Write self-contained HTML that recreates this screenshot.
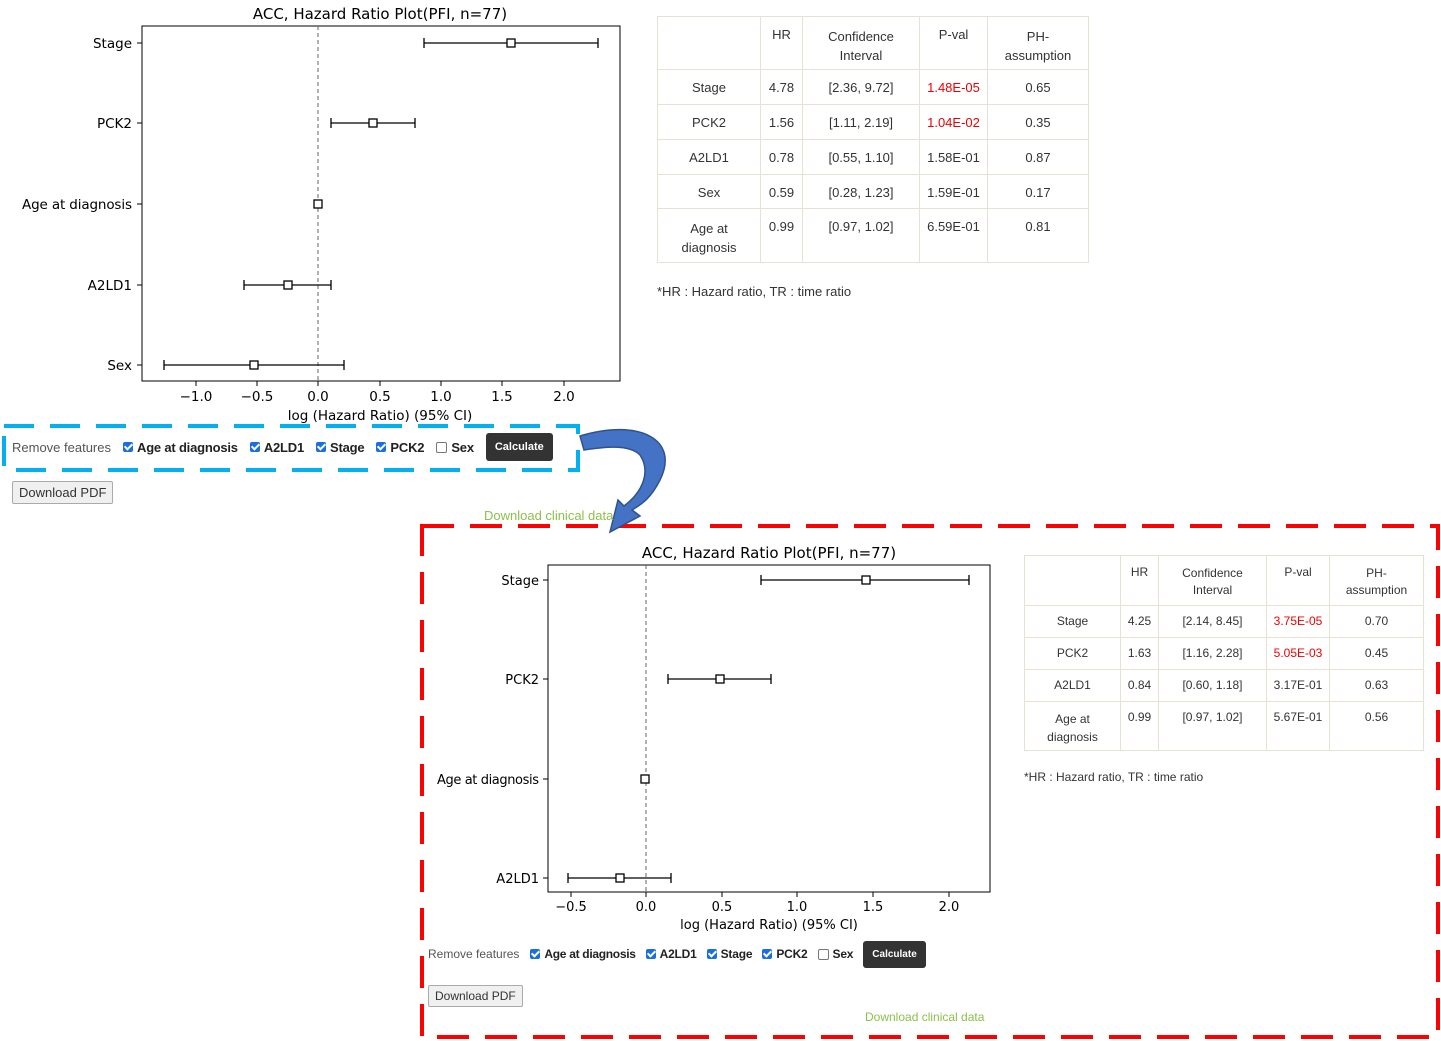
<!DOCTYPE html>
<html><head><meta charset="utf-8"><style>
body{margin:0;width:1441px;height:1041px;background:#fff;position:relative;overflow:hidden;font-family:"Liberation Sans",sans-serif;}
.a{position:absolute;}
table{border-collapse:collapse;position:absolute;font-size:13px;color:#333;}
td{border:1px solid #e6e0d6;text-align:center;vertical-align:top;padding:0;}
.r{color:#e00;}
.feat{position:absolute;font-size:13px;color:#222;display:flex;align-items:center;white-space:nowrap}
.feat .lbl{color:#555;margin-right:12px}
.cb{display:inline-block;width:10px;height:10px;border-radius:2px;background:#1a6fe0;margin-right:4px;position:relative}
.cb:after{content:"";position:absolute;left:3px;top:0px;width:3px;height:6px;border:solid #fff;border-width:0 2px 2px 0;transform:rotate(45deg)}
.cb.u{background:#fff;border:1px solid #777;width:9px;height:9px}
.cb.u:after{display:none}
.it{font-weight:bold;margin-right:12px;letter-spacing:-0.2px}
.calc{background:#333;color:#fff;font-size:11px;font-weight:bold;border-radius:3px;padding:8px 9px}
.pdf{position:absolute;border:1px solid #aaa;border-radius:2px;background:#f0f0f0;font-size:13px;color:#333;padding:3px 6px}
.green{position:absolute;color:#8cc04a;font-size:13px}
</style></head><body>

<svg class="a" style="left:0;top:0" width="1441" height="1041" font-family="DejaVu Sans, sans-serif" font-size="13.5">
<text x="380" y="19" text-anchor="middle" font-size="15">ACC, Hazard Ratio Plot(PFI, n=77)</text>
<rect x="142" y="26" width="478" height="355" fill="none" stroke="#000"/>
<line x1="318" y1="26" x2="318" y2="381" stroke="#666" stroke-dasharray="4,3"/>
<g stroke="#000" stroke-width="1.3">
<line x1="424" y1="43" x2="598" y2="43"/><line x1="424" y1="38" x2="424" y2="48"/><line x1="598" y1="38" x2="598" y2="48"/>
<line x1="331" y1="123" x2="415" y2="123"/><line x1="331" y1="118" x2="331" y2="128"/><line x1="415" y1="118" x2="415" y2="128"/>
<line x1="244" y1="285" x2="331" y2="285"/><line x1="244" y1="280" x2="244" y2="290"/><line x1="331" y1="280" x2="331" y2="290"/>
<line x1="164" y1="365" x2="344" y2="365"/><line x1="164" y1="360" x2="164" y2="370"/><line x1="344" y1="360" x2="344" y2="370"/>
</g>
<g fill="#fff" stroke="#000" stroke-width="1.3">
<rect x="507" y="39" width="8" height="8"/><rect x="369" y="119" width="8" height="8"/><rect x="314" y="200" width="8" height="8"/><rect x="284" y="281" width="8" height="8"/><rect x="250" y="361" width="8" height="8"/>
</g>
<g text-anchor="end"><text x="132" y="48">Stage</text><text x="132" y="128">PCK2</text><text x="132" y="209" textLength="110">Age at diagnosis</text><text x="132" y="290">A2LD1</text><text x="132" y="370">Sex</text></g>
<g stroke="#000"><line x1="137" y1="43" x2="142" y2="43"/><line x1="137" y1="123" x2="142" y2="123"/><line x1="137" y1="204" x2="142" y2="204"/><line x1="137" y1="285" x2="142" y2="285"/><line x1="137" y1="365" x2="142" y2="365"/>
<line x1="196" y1="381" x2="196" y2="386"/><line x1="257" y1="381" x2="257" y2="386"/><line x1="318" y1="381" x2="318" y2="386"/><line x1="380" y1="381" x2="380" y2="386"/><line x1="441" y1="381" x2="441" y2="386"/><line x1="502" y1="381" x2="502" y2="386"/><line x1="564" y1="381" x2="564" y2="386"/></g>
<g text-anchor="middle"><text x="196" y="401">−1.0</text><text x="257" y="401">−0.5</text><text x="318" y="401">0.0</text><text x="380" y="401">0.5</text><text x="441" y="401">1.0</text><text x="502" y="401">1.5</text><text x="564" y="401">2.0</text>
<text x="380" y="420">log (Hazard Ratio) (95% CI)</text></g>

<text x="769" y="558" text-anchor="middle" font-size="15">ACC, Hazard Ratio Plot(PFI, n=77)</text>
<rect x="548" y="565" width="442" height="327" fill="none" stroke="#000"/>
<line x1="646" y1="565" x2="646" y2="892" stroke="#666" stroke-dasharray="4,3"/>
<g stroke="#000" stroke-width="1.3">
<line x1="761" y1="580" x2="969" y2="580"/><line x1="761" y1="575" x2="761" y2="585"/><line x1="969" y1="575" x2="969" y2="585"/>
<line x1="668" y1="679" x2="771" y2="679"/><line x1="668" y1="674" x2="668" y2="684"/><line x1="771" y1="674" x2="771" y2="684"/>
<line x1="568" y1="878" x2="671" y2="878"/><line x1="568" y1="873" x2="568" y2="883"/><line x1="671" y1="873" x2="671" y2="883"/>
</g>
<g fill="#fff" stroke="#000" stroke-width="1.3">
<rect x="862" y="576" width="8" height="8"/><rect x="716" y="675" width="8" height="8"/><rect x="641" y="775" width="8" height="8"/><rect x="616" y="874" width="8" height="8"/>
</g>
<g text-anchor="end" font-size="13"><text x="539" y="585">Stage</text><text x="539" y="684">PCK2</text><text x="539" y="784" textLength="102">Age at diagnosis</text><text x="539" y="883">A2LD1</text></g>
<g stroke="#000"><line x1="543" y1="580" x2="548" y2="580"/><line x1="543" y1="679" x2="548" y2="679"/><line x1="543" y1="779" x2="548" y2="779"/><line x1="543" y1="878" x2="548" y2="878"/>
<line x1="571" y1="892" x2="571" y2="897"/><line x1="646" y1="892" x2="646" y2="897"/><line x1="722" y1="892" x2="722" y2="897"/><line x1="797" y1="892" x2="797" y2="897"/><line x1="873" y1="892" x2="873" y2="897"/><line x1="949" y1="892" x2="949" y2="897"/></g>
<g text-anchor="middle" font-size="13"><text x="571" y="911">−0.5</text><text x="646" y="911">0.0</text><text x="722" y="911">0.5</text><text x="797" y="911">1.0</text><text x="873" y="911">1.5</text><text x="949" y="911">2.0</text>
<text x="769" y="929">log (Hazard Ratio) (95% CI)</text></g>

<rect x="4" y="426" width="574" height="44" fill="none" stroke="#00b0f0" stroke-width="4" stroke-dasharray="30,16"/>
<rect x="422" y="526" width="1016" height="511" fill="none" stroke="#f00" stroke-width="4" stroke-dasharray="32,16"/>
<path d="M580,436 C640,418 680,440 660,480 C650,500 640,505 632,510 L640,516 L610,532 L618,500 L624,506 C645,490 650,470 640,455 C630,445 610,446 584,450 Z" fill="#4472c4" stroke="#2f528f" stroke-width="1.5"/>
</svg>

<table style="left:657px;top:16px;width:432px">
<tr style="height:53px"><td style="width:102px"></td><td style="width:41px;padding-top:10px">HR</td><td style="width:116px;padding-top:10px;line-height:19px">Confidence<br>Interval</td><td style="width:67px;padding-top:10px">P-val</td><td style="padding-top:10px;line-height:19px">PH-<br>assumption</td></tr>
<tr style="height:35px"><td style="padding-top:10px">Stage</td><td style="padding-top:10px">4.78</td><td style="padding-top:10px">[2.36, 9.72]</td><td class="r" style="padding-top:10px">1.48E-05</td><td style="padding-top:10px">0.65</td></tr>
<tr style="height:35px"><td style="padding-top:10px">PCK2</td><td style="padding-top:10px">1.56</td><td style="padding-top:10px">[1.11, 2.19]</td><td class="r" style="padding-top:10px">1.04E-02</td><td style="padding-top:10px">0.35</td></tr>
<tr style="height:35px"><td style="padding-top:10px">A2LD1</td><td style="padding-top:10px">0.78</td><td style="padding-top:10px">[0.55, 1.10]</td><td style="padding-top:10px">1.58E-01</td><td style="padding-top:10px">0.87</td></tr>
<tr style="height:34px"><td style="padding-top:10px">Sex</td><td style="padding-top:10px">0.59</td><td style="padding-top:10px">[0.28, 1.23]</td><td style="padding-top:10px">1.59E-01</td><td style="padding-top:10px">0.17</td></tr>
<tr style="height:54px"><td style="padding-top:10px;line-height:19px">Age at<br>diagnosis</td><td style="padding-top:10px">0.99</td><td style="padding-top:10px">[0.97, 1.02]</td><td style="padding-top:10px">6.59E-01</td><td style="padding-top:10px">0.81</td></tr>
</table>
<div class="a" style="left:657px;top:284px;font-size:13px;color:#333">*HR : Hazard ratio, TR : time ratio</div>

<table style="left:1024px;top:555px;width:400px;font-size:12px">
<tr style="height:50px"><td style="width:95px"></td><td style="width:37px;padding-top:9px">HR</td><td style="width:107px;padding-top:9px;line-height:17px">Confidence<br>Interval</td><td style="width:62px;padding-top:9px">P-val</td><td style="padding-top:9px;line-height:17px">PH-<br>assumption</td></tr>
<tr style="height:32px"><td style="padding-top:8px">Stage</td><td style="padding-top:8px">4.25</td><td style="padding-top:8px">[2.14, 8.45]</td><td class="r" style="padding-top:8px">3.75E-05</td><td style="padding-top:8px">0.70</td></tr>
<tr style="height:32px"><td style="padding-top:8px">PCK2</td><td style="padding-top:8px">1.63</td><td style="padding-top:8px">[1.16, 2.28]</td><td class="r" style="padding-top:8px">5.05E-03</td><td style="padding-top:8px">0.45</td></tr>
<tr style="height:32px"><td style="padding-top:8px">A2LD1</td><td style="padding-top:8px">0.84</td><td style="padding-top:8px">[0.60, 1.18]</td><td style="padding-top:8px">3.17E-01</td><td style="padding-top:8px">0.63</td></tr>
<tr style="height:49px"><td style="padding-top:8px;line-height:18px">Age at<br>diagnosis</td><td style="padding-top:8px">0.99</td><td style="padding-top:8px">[0.97, 1.02]</td><td style="padding-top:8px">5.67E-01</td><td style="padding-top:8px">0.56</td></tr>
</table>
<div class="a" style="left:1024px;top:770px;font-size:12px;color:#333">*HR : Hazard ratio, TR : time ratio</div>

<div class="feat" style="left:12px;top:432px;height:30px"><span class="lbl">Remove features</span><span class="cb"></span><span class="it">Age at diagnosis</span><span class="cb"></span><span class="it">A2LD1</span><span class="cb"></span><span class="it">Stage</span><span class="cb"></span><span class="it">PCK2</span><span class="cb u"></span><span class="it">Sex</span><span class="calc">Calculate</span></div>
<div class="pdf" style="left:12px;top:481px">Download PDF</div>
<div class="green" style="left:484px;top:508px">Download clinical data</div>

<div class="feat" style="left:428px;top:941px;height:26px;font-size:12px"><span class="lbl" style="margin-right:11px">Remove features</span><span class="cb"></span><span class="it" style="margin-right:10px;letter-spacing:-0.3px">Age at diagnosis</span><span class="cb"></span><span class="it" style="margin-right:10px">A2LD1</span><span class="cb"></span><span class="it" style="margin-right:10px">Stage</span><span class="cb"></span><span class="it" style="margin-right:10px">PCK2</span><span class="cb u"></span><span class="it" style="margin-right:10px">Sex</span><span class="calc" style="font-size:10px">Calculate</span></div>
<div class="pdf" style="left:428px;top:985px;font-size:12px">Download PDF</div>
<div class="green" style="left:865px;top:1010px;font-size:12px">Download clinical data</div>
</body></html>
